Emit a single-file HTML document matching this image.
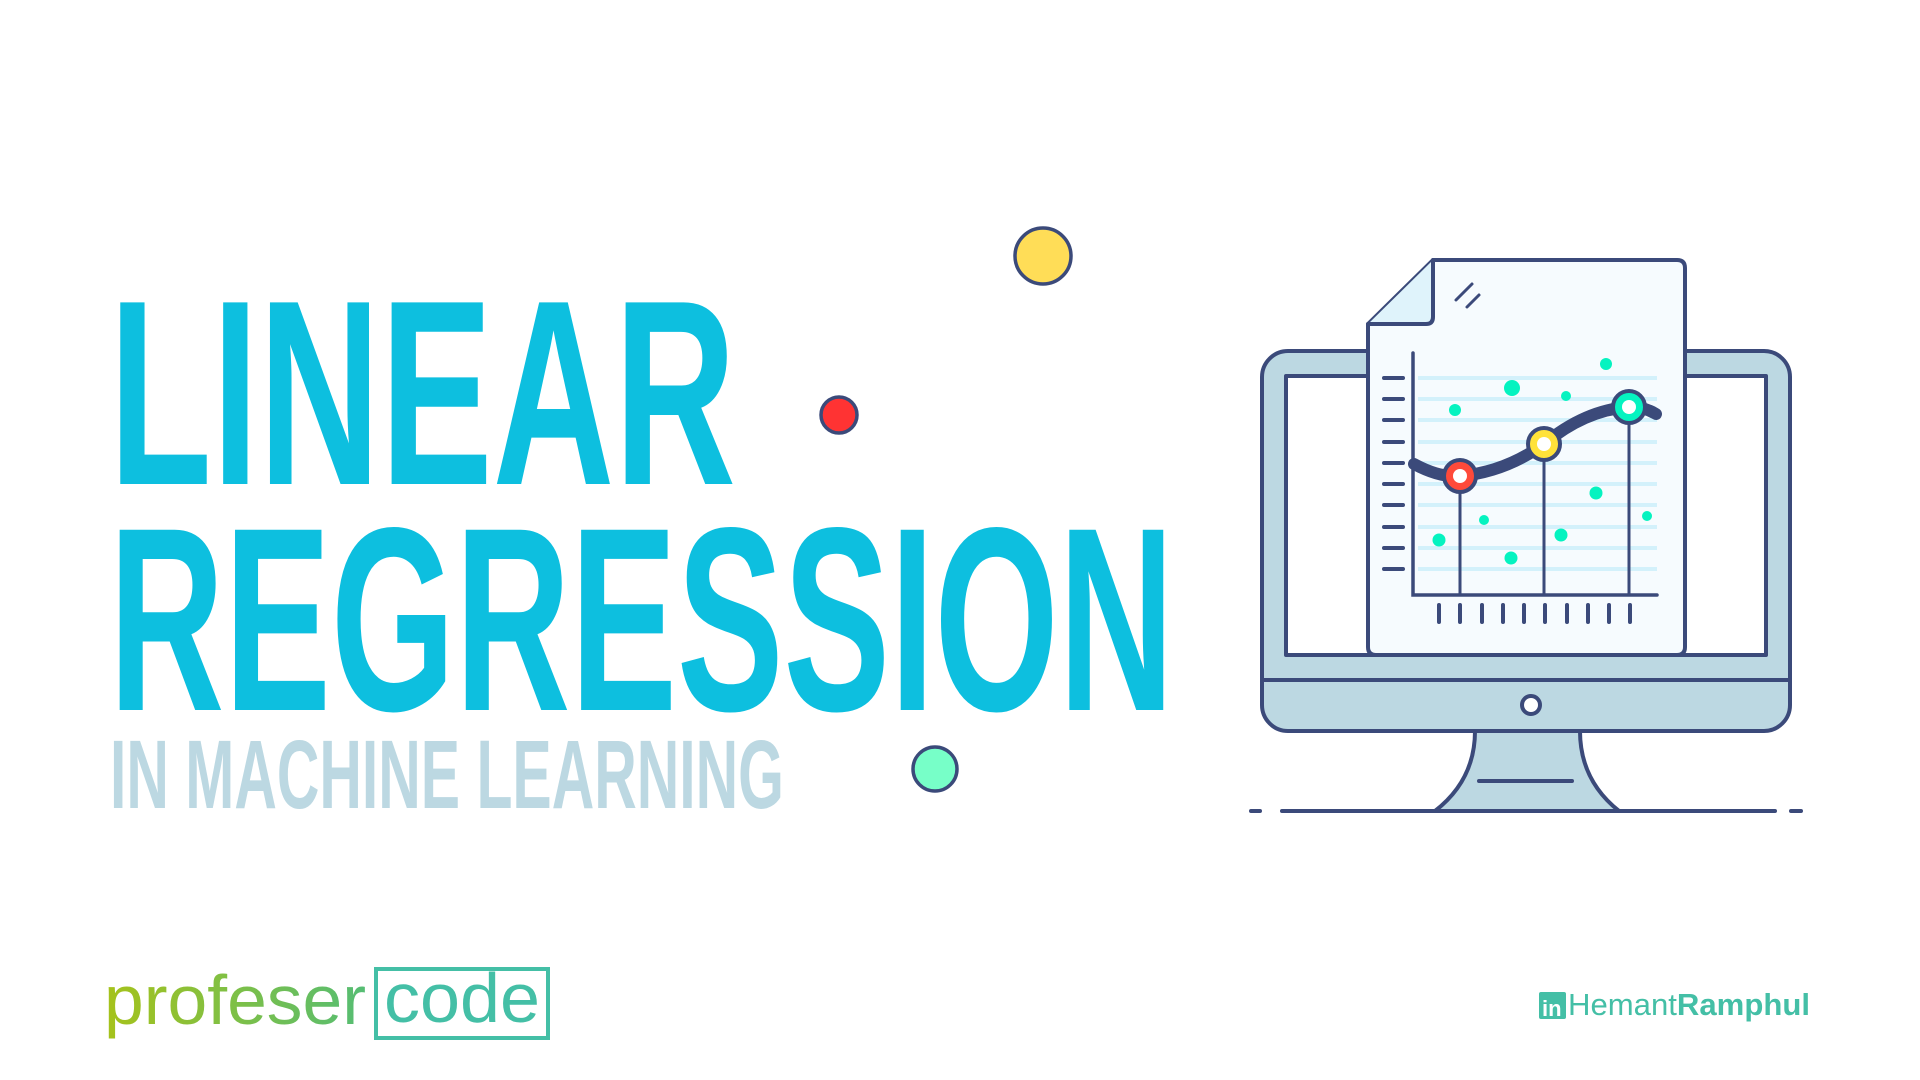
<!DOCTYPE html>
<html><head><meta charset="utf-8"><style>
html,body{margin:0;padding:0;background:#fff;width:1920px;height:1080px;overflow:hidden}
svg{display:block}
</style></head><body>
<svg width="1920" height="1080" viewBox="0 0 1920 1080" xmlns="http://www.w3.org/2000/svg">
<defs>
<linearGradient id="pg" x1="0" x2="1"><stop offset="0" stop-color="#a6c21a"/><stop offset="1" stop-color="#55bd74"/></linearGradient>
</defs>
<g font-family="Liberation Sans, sans-serif" font-weight="bold">
<text x="109" y="484" font-size="264" fill="#0dbfdf" textLength="627" lengthAdjust="spacingAndGlyphs">LINEAR</text>
<text x="109" y="710" font-size="262" fill="#0dbfdf" textLength="1065" lengthAdjust="spacingAndGlyphs">REGRESSION</text>
<text x="110" y="808" font-size="97" fill="#bcd8e2" textLength="674" lengthAdjust="spacingAndGlyphs">IN MACHINE LEARNING</text>
</g>
<g stroke="#3b4a7a" stroke-width="3.5">
<circle cx="1043" cy="256" r="28" fill="#ffdd57"/>
<circle cx="839" cy="415" r="18" fill="#ff3333"/>
<circle cx="935" cy="769" r="22" fill="#77ffc8"/>
</g>
<g stroke="#3b4a7a" stroke-width="4" stroke-linejoin="round" stroke-linecap="round">
<path d="M1475 731 Q1475 780 1435 811 L1619 811 Q1580 780 1580 731 Z" fill="#bcd8e2"/>
<rect x="1262" y="351" width="528" height="380" rx="26" fill="#bcd8e2"/>
<rect x="1286" y="376" width="480" height="279" fill="#fff"/>
<line x1="1262" y1="680" x2="1790" y2="680"/>
<circle cx="1531" cy="705" r="9" fill="#fff"/>
<line x1="1479" y1="781" x2="1572" y2="781"/>
<line x1="1251" y1="811" x2="1260" y2="811"/>
<line x1="1282" y1="811" x2="1775" y2="811"/>
<line x1="1791" y1="811" x2="1801" y2="811"/>
<path d="M1433 260 L1677 260 Q1685 260 1685 268 L1685 647 Q1685 655 1677 655 L1376 655 Q1368 655 1368 647 L1368 324 Z" fill="#f6fbfe"/>
<path d="M1368 324 L1426 324 Q1433 324 1433 317 L1433 260" fill="#dff3fb"/>
<line x1="1456" y1="300" x2="1472" y2="284" stroke-width="3"/>
<line x1="1467" y1="307" x2="1479" y2="295" stroke-width="3"/>
</g>
<g stroke="#d3f1fb" stroke-width="4">
<line x1="1418" y1="378" x2="1657" y2="378"/><line x1="1418" y1="399" x2="1657" y2="399"/><line x1="1418" y1="420" x2="1657" y2="420"/><line x1="1418" y1="442" x2="1657" y2="442"/><line x1="1418" y1="463" x2="1657" y2="463"/><line x1="1418" y1="484" x2="1657" y2="484"/><line x1="1418" y1="505" x2="1657" y2="505"/><line x1="1418" y1="527" x2="1657" y2="527"/><line x1="1418" y1="548" x2="1657" y2="548"/><line x1="1418" y1="569" x2="1657" y2="569"/>
</g>
<g stroke="#3b4a7a" stroke-width="4" stroke-linecap="round" fill="none">
<path d="M1384 378h19M1384 399h19M1384 420h19M1384 442h19M1384 463h19M1384 484h19M1384 505h19M1384 527h19M1384 548h19M1384 569h19"/>
<path d="M1439 605v17M1460 605v17M1482 605v17M1503 605v17M1524 605v17M1545 605v17M1567 605v17M1588 605v17M1609 605v17M1630 605v17"/>
<path d="M1413 353 V595 H1657" stroke-width="3.5"/>
<path d="M1460 476V595M1544 444V595M1629 407V595" stroke-width="3"/>
<path d="M1414 464 Q1440 478 1460 476 Q1505 472 1544 444 Q1585 410 1629 407 Q1645 407 1656 414" stroke-width="12"/>
</g>
<g fill="#05f3c0">
<circle cx="1455" cy="410" r="6"/><circle cx="1512" cy="388" r="8"/><circle cx="1566" cy="396" r="5"/><circle cx="1606" cy="364" r="6"/><circle cx="1596" cy="493" r="6.5"/><circle cx="1647" cy="516" r="5"/><circle cx="1484" cy="520" r="5"/><circle cx="1439" cy="540" r="6.5"/><circle cx="1561" cy="535" r="6.5"/><circle cx="1511" cy="558" r="6.5"/>
</g>
<g stroke="#3b4a7a" stroke-width="4">
<circle cx="1460" cy="476" r="16" fill="#ff4a3a"/><circle cx="1460" cy="476" r="7" fill="#fff" stroke="none"/>
<circle cx="1544" cy="444" r="16" fill="#ffe23a"/><circle cx="1544" cy="444" r="7" fill="#fff" stroke="none"/>
<circle cx="1629" cy="407" r="16" fill="#05f3c0"/><circle cx="1629" cy="407" r="7" fill="#fff" stroke="none"/>
</g>
<text x="104" y="1024" font-family="Liberation Sans, sans-serif" font-size="70" fill="url(#pg)" textLength="262" lengthAdjust="spacingAndGlyphs">profeser</text>
<rect x="376" y="969" width="172" height="69" fill="none" stroke="#44bfa6" stroke-width="4"/>
<text x="384" y="1022" font-family="Liberation Sans, sans-serif" font-size="70" fill="#44bfa6" textLength="156" lengthAdjust="spacingAndGlyphs">code</text>
<rect x="1539" y="992" width="27" height="27" rx="2" fill="#44bfa6"/>
<text x="1542" y="1016" font-family="Liberation Sans, sans-serif" font-weight="bold" font-size="22" fill="#fff">in</text>
<text x="1568" y="1015" font-family="Liberation Sans, sans-serif" font-size="31" fill="#44bfa6" textLength="242" lengthAdjust="spacingAndGlyphs">Hemant<tspan font-weight="bold">Ramphul</tspan></text>
</svg>
</body></html>
